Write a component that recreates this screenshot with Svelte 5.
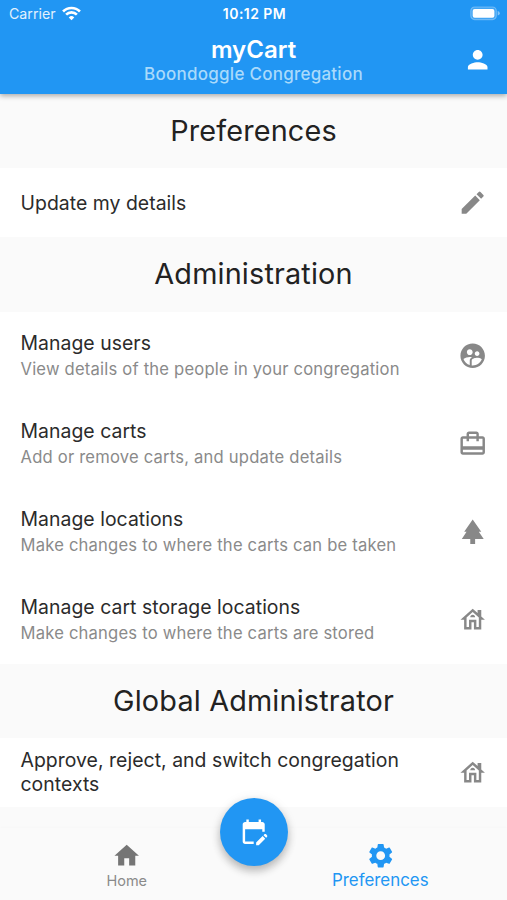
<script>
  const icons = {
    person: 'M12 12c2.21 0 4-1.79 4-4s-1.79-4-4-4-4 1.79-4 4 1.79 4 4 4zm0 2c-2.67 0-8 1.34-8 4v2h16v-2c0-2.66-5.33-4-8-4z',
    edit: 'M3 17.25V21h3.75L17.81 9.94l-3.75-3.75L3 17.25zM20.71 7.04a.996.996 0 0 0 0-1.41l-2.34-2.34a.996.996 0 0 0-1.41 0l-1.83 1.83 3.75 3.75 1.83-1.83z',
    users: 'M11.99 2c-5.52 0-10 4.48-10 10s4.48 10 10 10 10-4.48 10-10-4.48-10-10-10zm3.61 6.34c1.07 0 1.93.86 1.93 1.93 0 1.07-.86 1.93-1.93 1.93-1.07 0-1.93-.86-1.93-1.93-.01-1.07.86-1.93 1.93-1.93zm-6-1.58c1.3 0 2.36 1.06 2.36 2.36 0 1.3-1.06 2.36-2.36 2.36s-2.36-1.06-2.36-2.36c0-1.31 1.05-2.36 2.36-2.36zm0 9.13v3.75c-2.4-.75-4.3-2.6-5.14-4.96 1.05-1.12 3.67-1.69 5.14-1.69.53 0 1.2.08 1.9.22-1.64.87-1.9 2.02-1.9 2.68zM11.99 20c-.27 0-.53-.01-.79-.04v-4.07c0-1.42 2.94-2.13 4.4-2.13 1.07 0 2.92.39 3.84 1.15-1.17 2.97-4.06 5.09-7.45 5.09z',
    cart: 'M20 6h-3V4c0-1.11-.89-2-2-2H9c-1.11 0-2 .89-2 2v2H4c-1.11 0-2 .89-2 2v11c0 1.11.89 2 2 2h16c1.11 0 2-.89 2-2V8c0-1.11-.89-2-2-2zM9 4h6v2H9V4zm11 15H4v-2h16v2zm0-5H4V8h3v2h2V8h6v2h2V8h3v6z',
    park: 'M17 12h2L12 2 5.05 12H7l-3.9 6h6.92v4h3.96v-4H21z',
    house: 'M19 9.3V4h-3v2.6L12 3 2 12h3v8h6v-6h2v6h6v-8h3l-3-2.7zM17 18h-2v-6H9v6H7v-7.81l5-4.5 5 4.5V18zM10 10h4c0-1.1-.9-2-2-2s-2 .9-2 2z',
    home: 'M10 20v-6h4v6h5v-8h3L12 3 2 12h3v8z',
    settings: 'M19.14 12.94c.04-.3.06-.61.06-.94 0-.32-.02-.64-.07-.94l2.03-1.58c.18-.14.23-.41.12-.61l-1.92-3.32c-.12-.22-.37-.29-.59-.22l-2.39.96c-.5-.38-1.03-.7-1.62-.94l-.36-2.54c-.04-.24-.24-.41-.48-.41h-3.84c-.24 0-.43.17-.47.41l-.36 2.54c-.59.24-1.13.57-1.62.94l-2.39-.96c-.22-.08-.47 0-.59.22L2.74 8.87c-.12.21-.08.47.12.61l2.03 1.58c-.05.3-.09.63-.09.94s.02.64.07.94l-2.03 1.58c-.18.14-.23.41-.12.61l1.92 3.32c.12.22.37.29.59.22l2.39-.96c.5.38 1.03.7 1.62.94l.36 2.54c.05.24.24.41.48.41h3.84c.24 0 .44-.17.47-.41l.36-2.54c.59-.24 1.13-.56 1.62-.94l2.39.96c.22.08.47 0 .59-.22l1.92-3.32c.12-.22.07-.47-.12-.61l-2.01-1.58zM12 15.6c-1.98 0-3.6-1.62-3.6-3.6s1.62-3.6 3.6-3.6 3.6 1.62 3.6 3.6-1.62 3.6-3.6 3.6z',
    calendar: 'M12 22H5c-1.11 0-2-.9-2-2L3.01 6c0-1.1.88-2 1.99-2h1V2h2v2h8V2h2v2h1c1.1 0 2 .9 2 2v6h-2v-2H5v10h7v2zm10.13-5.01.71-.71c.39-.39.39-1.02 0-1.41l-.71-.71c-.39-.39-1.02-.39-1.41 0l-.71.71 2.12 2.12zm-.71.71-5.3 5.3H14v-2.12l5.3-5.3 2.12 2.12z',
  };

  const sections = [
    { title: 'Preferences', rows: [{ title: 'Update my details', icon: 'edit' }] },
    {
      title: 'Administration',
      rows: [
        { title: 'Manage users', sub: 'View details of the people in your congregation', icon: 'users' },
        { title: 'Manage carts', sub: 'Add or remove carts, and update details', icon: 'cart' },
        { title: 'Manage locations', sub: 'Make changes to where the carts can be taken', icon: 'park' },
        { title: 'Manage cart storage locations', sub: 'Make changes to where the carts are stored', icon: 'house' },
      ],
    },
    {
      title: 'Global Administrator',
      rows: [{ title: 'Approve, reject, and switch congregation contexts', icon: 'house' }],
    },
  ];
</script>

{#snippet icon(name)}
  <svg class="icon" viewBox="0 0 24 24" aria-hidden="true"><path d={icons[name]} /></svg>
{/snippet}

<div class="screen">
  <header>
    <div class="status">
      <div class="carrier">
        <span>Carrier</span>
        <svg class="wifi" viewBox="0 0 18 14" aria-hidden="true">
          <path d="M9 13.3 6.4 10.7a3.7 3.7 0 0 1 5.2 0z" />
          <path class="arc" d="M3.9 8.1a7.2 7.2 0 0 1 10.2 0M1 5.1a11.3 11.3 0 0 1 16 0" />
        </svg>
      </div>
      <span class="time">10:12 PM</span>
      <svg class="battery" viewBox="0 0 31 15" aria-hidden="true">
        <rect class="shell" x=".8" y=".8" width="26.4" height="13" rx="4" />
        <rect x="2.8" y="2.8" width="22.4" height="9" rx="2" />
        <path class="tip" d="M28.6 5q2.2.6 2.2 2.3t-2.2 2.3z" />
      </svg>
    </div>
    <div class="appbar">
      <div class="titles">
        <h1>myCart</h1>
        <p>Boondoggle Congregation</p>
      </div>
      <div class="profile">{@render icon('person')}</div>
    </div>
  </header>

  <main>
    {#each sections as section}
      <h2>{section.title}</h2>
      {#each section.rows as row}
        <div class="row" class:two={row.sub}>
          <div class="text">
            <div class="title">{row.title}</div>
            {#if row.sub}<div class="sub">{row.sub}</div>{/if}
          </div>
          {@render icon(row.icon)}
        </div>
      {/each}
    {/each}
  </main>

  <nav>
    <div class="tab">
      {@render icon('home')}
      <span>Home</span>
    </div>
    <div class="tab active">
      {@render icon('settings')}
      <span>Preferences</span>
    </div>
    <div class="fab">{@render icon('calendar')}</div>
  </nav>
</div>

<style>
  .screen {
    width: 507px;
    height: 900px;
    display: flex;
    flex-direction: column;
    overflow: hidden;
    background: #fafafa;
    color: #222;
    font-family: Inter, 'Liberation Sans', sans-serif;
  }
  h1, h2, p { margin: 0; font-weight: 400; }
  .icon {
    display: block;
    width: 29.4px;
    height: 29.4px;
    flex: none;
    fill: currentColor;
  }
  header {
    position: relative;
    z-index: 1;
    flex: none;
    height: 94px;
    background: #2196f3;
    color: #fff;
    box-shadow: 0 2px 5px rgba(0, 0, 0, 0.32);
  }
  .status {
    display: grid;
    grid-template-columns: 1fr auto 1fr;
    align-items: center;
    height: 27px;
    padding: 0 7px 0 9px;
    font-size: 14.2px;
  }
  .carrier { display: flex; align-items: center; gap: 6px; color: #e2f1fd; }
  .wifi { width: 19px; height: 15px; fill: #fff; }
  .arc { fill: none; stroke: #fff; stroke-width: 2.5; }
  .time { font-weight: 600; font-size: 14px; letter-spacing: 0.45px; }
  .battery { justify-self: end; width: 30px; height: 15px; fill: #fff; }
  .shell { fill: #fff; fill-opacity: 0.15; stroke: #fff; stroke-opacity: 0.3; stroke-width: 1.2; }
  .tip { fill-opacity: 0.45; }
  .appbar {
    display: grid;
    grid-template-columns: 60px 1fr 60px;
    align-items: center;
    height: 67px;
    padding-bottom: 2px;
    box-sizing: border-box;
  }
  .titles { grid-column: 2; text-align: center; padding-top: 1px; }
  h1 { font-size: 24px; line-height: 28px; font-weight: 600; }
  .titles p { font-size: 17px; line-height: 21px; font-weight: 500; letter-spacing: 0.25px; color: #a9dafb; }
  .profile { display: flex; justify-content: center; padding-left: 1px; }
  main { flex: 1; min-height: 0; overflow: hidden; }
  h2 {
    height: 74.4px;
    line-height: 74px;
    text-align: center;
    font-size: 28.8px;
    letter-spacing: 0.17px;
  }
  .row {
    display: flex;
    align-items: center;
    justify-content: space-between;
    gap: 40px;
    height: 69px;
    padding: 0 20px 0 20.5px;
    background: #fff;
    color: #888;
  }
  .two { height: 88px; }
  .two .icon { margin-bottom: 1px; }
  .title { font-size: 19.4px; line-height: 23.5px; padding-top: 1px; color: #2b2b2b; letter-spacing: 0.04px; }
  .row:last-child .title { padding-top: 0; }
  .sub { font-size: 16.6px; line-height: 24px; margin-top: 1px; color: #8a8a8a; letter-spacing: 0.2px; }
  nav {
    position: relative;
    flex: none;
    height: 72px;
    display: flex;
    background: #fafafa;
    box-shadow: 0 -1px 2px rgba(0, 0, 0, 0.015);
  }
  .tab {
    flex: 1;
    display: flex;
    flex-direction: column;
    align-items: center;
    padding-top: 13px;
    color: #757575;
  }
  .tab span { font-size: 14.5px; line-height: 20px; margin-top: 1px; color: #8a8a8a; }
  .active { color: #2196f3; }
  .active span { font-size: 16.9px; margin-top: 0; color: #2196f3; }
  .fab {
    position: absolute;
    left: 219.5px;
    top: -30.5px;
    width: 68.5px;
    height: 68.5px;
    display: flex;
    align-items: center;
    justify-content: center;
    border-radius: 50%;
    background: #2196f3;
    color: #fff;
    box-shadow: 0 5px 8px rgba(0, 0, 0, 0.24), 0 1px 12px rgba(0, 0, 0, 0.08);
  }
</style>
